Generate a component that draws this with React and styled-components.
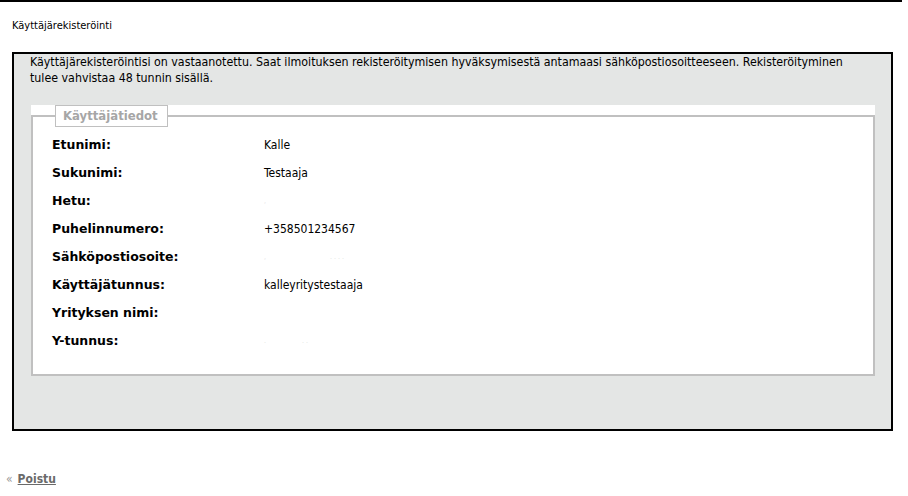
import React from 'react'
import styled, { createGlobalStyle } from 'styled-components'

const GlobalStyle = createGlobalStyle`
    body {
        margin: 0;
        background: #fff;
        font-family: "DejaVu Sans Condensed", "DejaVu Sans", sans-serif;
        font-size: 11px;
        color: #000;
    }
`

const Page = styled.div`
    width: 902px;
    border-top: 2px solid #000;
`

const Title = styled.div`
    margin: 16px 12px 0 12px;
    line-height: 16px;
    height: 34px;
`

const Box = styled.div`
    margin: 0 9px 0 12px;
    border: 2px solid #000;
    background-color: #e4e6e5;
    padding: 0 16px 53px 17px;
`

const Notice = styled.p`
    margin: 0 15px 19px -1px;
    font-size: 12.3px;
    line-height: 16px;
`

const Sheet = styled.div`
    background-color: #fff;
`

const Fieldset = styled.fieldset`
    margin: 0;
    border: 2px solid #c0c0c0;
    padding: 4px 16px 19px 19px;
`

const Legend = styled.legend`
    margin: 0 2px 0 3px;
    padding: 2px 9px 2px 7px;
    border: 1px solid #c0c0c0;
    color: #a6a6a6;
    font-size: 13px;
    font-weight: bold;
    line-height: 16px;
`

const Rows = styled.div`
    display: grid;
    grid-template-columns: 212px 1fr;
    grid-auto-rows: 28px;
    align-items: center;
`

const Label = styled.div`
    font-family: "DejaVu Sans", sans-serif;
    font-size: 12.5px;
    font-weight: bold;
    line-height: 16px;
`

const Value = styled.div`
    line-height: 16px;
    color: ${p => (p.$hidden ? '#e2e2e2' : '#000')};
    font-size: ${p => (p.$hidden ? '7px' : '12px')};
`

const Footer = styled.div`
    margin-top: 40px;
    padding-left: 6px;
    font-size: 12px;
    line-height: 16px;
`

const Arrow = styled.span`
    color: #9a9a9a;
    margin-right: 5px;
`

const Link = styled.a`
    color: #6a6a6a;
    font-weight: bold;
    text-decoration: underline;
    cursor: pointer;
`

const gap = n => '\u00a0'.repeat(n)

const fields = [
    ['Etunimi:', 'Kalle'],
    ['Sukunimi:', 'Testaaja'],
    ['Hetu:', ',', true],
    ['Puhelinnumero:', '+358501234567'],
    ['Sähköpostiosoite:', ',' + gap(32) + '. . . .', true],
    ['Käyttäjätunnus:', 'kalleyritystestaaja'],
    ['Yrityksen nimi:', ''],
    ['Y-tunnus:', '.' + gap(18) + '. .', true],
]

function App() {
    return (
        <>
            <GlobalStyle />
            <Page>
                <Title>Käyttäjärekisteröinti</Title>
                <Box>
                    <Notice>
                        Käyttäjärekisteröintisi on vastaanotettu. Saat ilmoituksen rekisteröitymisen hyväksymisestä antamaasi sähköpostiosoitteeseen. Rekisteröityminen tulee vahvistaa 48 tunnin sisällä.
                    </Notice>
                    <Sheet>
                        <Fieldset>
                            <Legend>Käyttäjätiedot</Legend>
                            <Rows>
                                {fields.map(([label, value, hidden]) => (
                                    <React.Fragment key={label}>
                                        <Label>{label}</Label>
                                        <Value $hidden={hidden}>{value}</Value>
                                    </React.Fragment>
                                ))}
                            </Rows>
                        </Fieldset>
                    </Sheet>
                </Box>
                <Footer>
                    <Arrow>«</Arrow>
                    <Link>Poistu</Link>
                </Footer>
            </Page>
        </>
    )
}

export default App
